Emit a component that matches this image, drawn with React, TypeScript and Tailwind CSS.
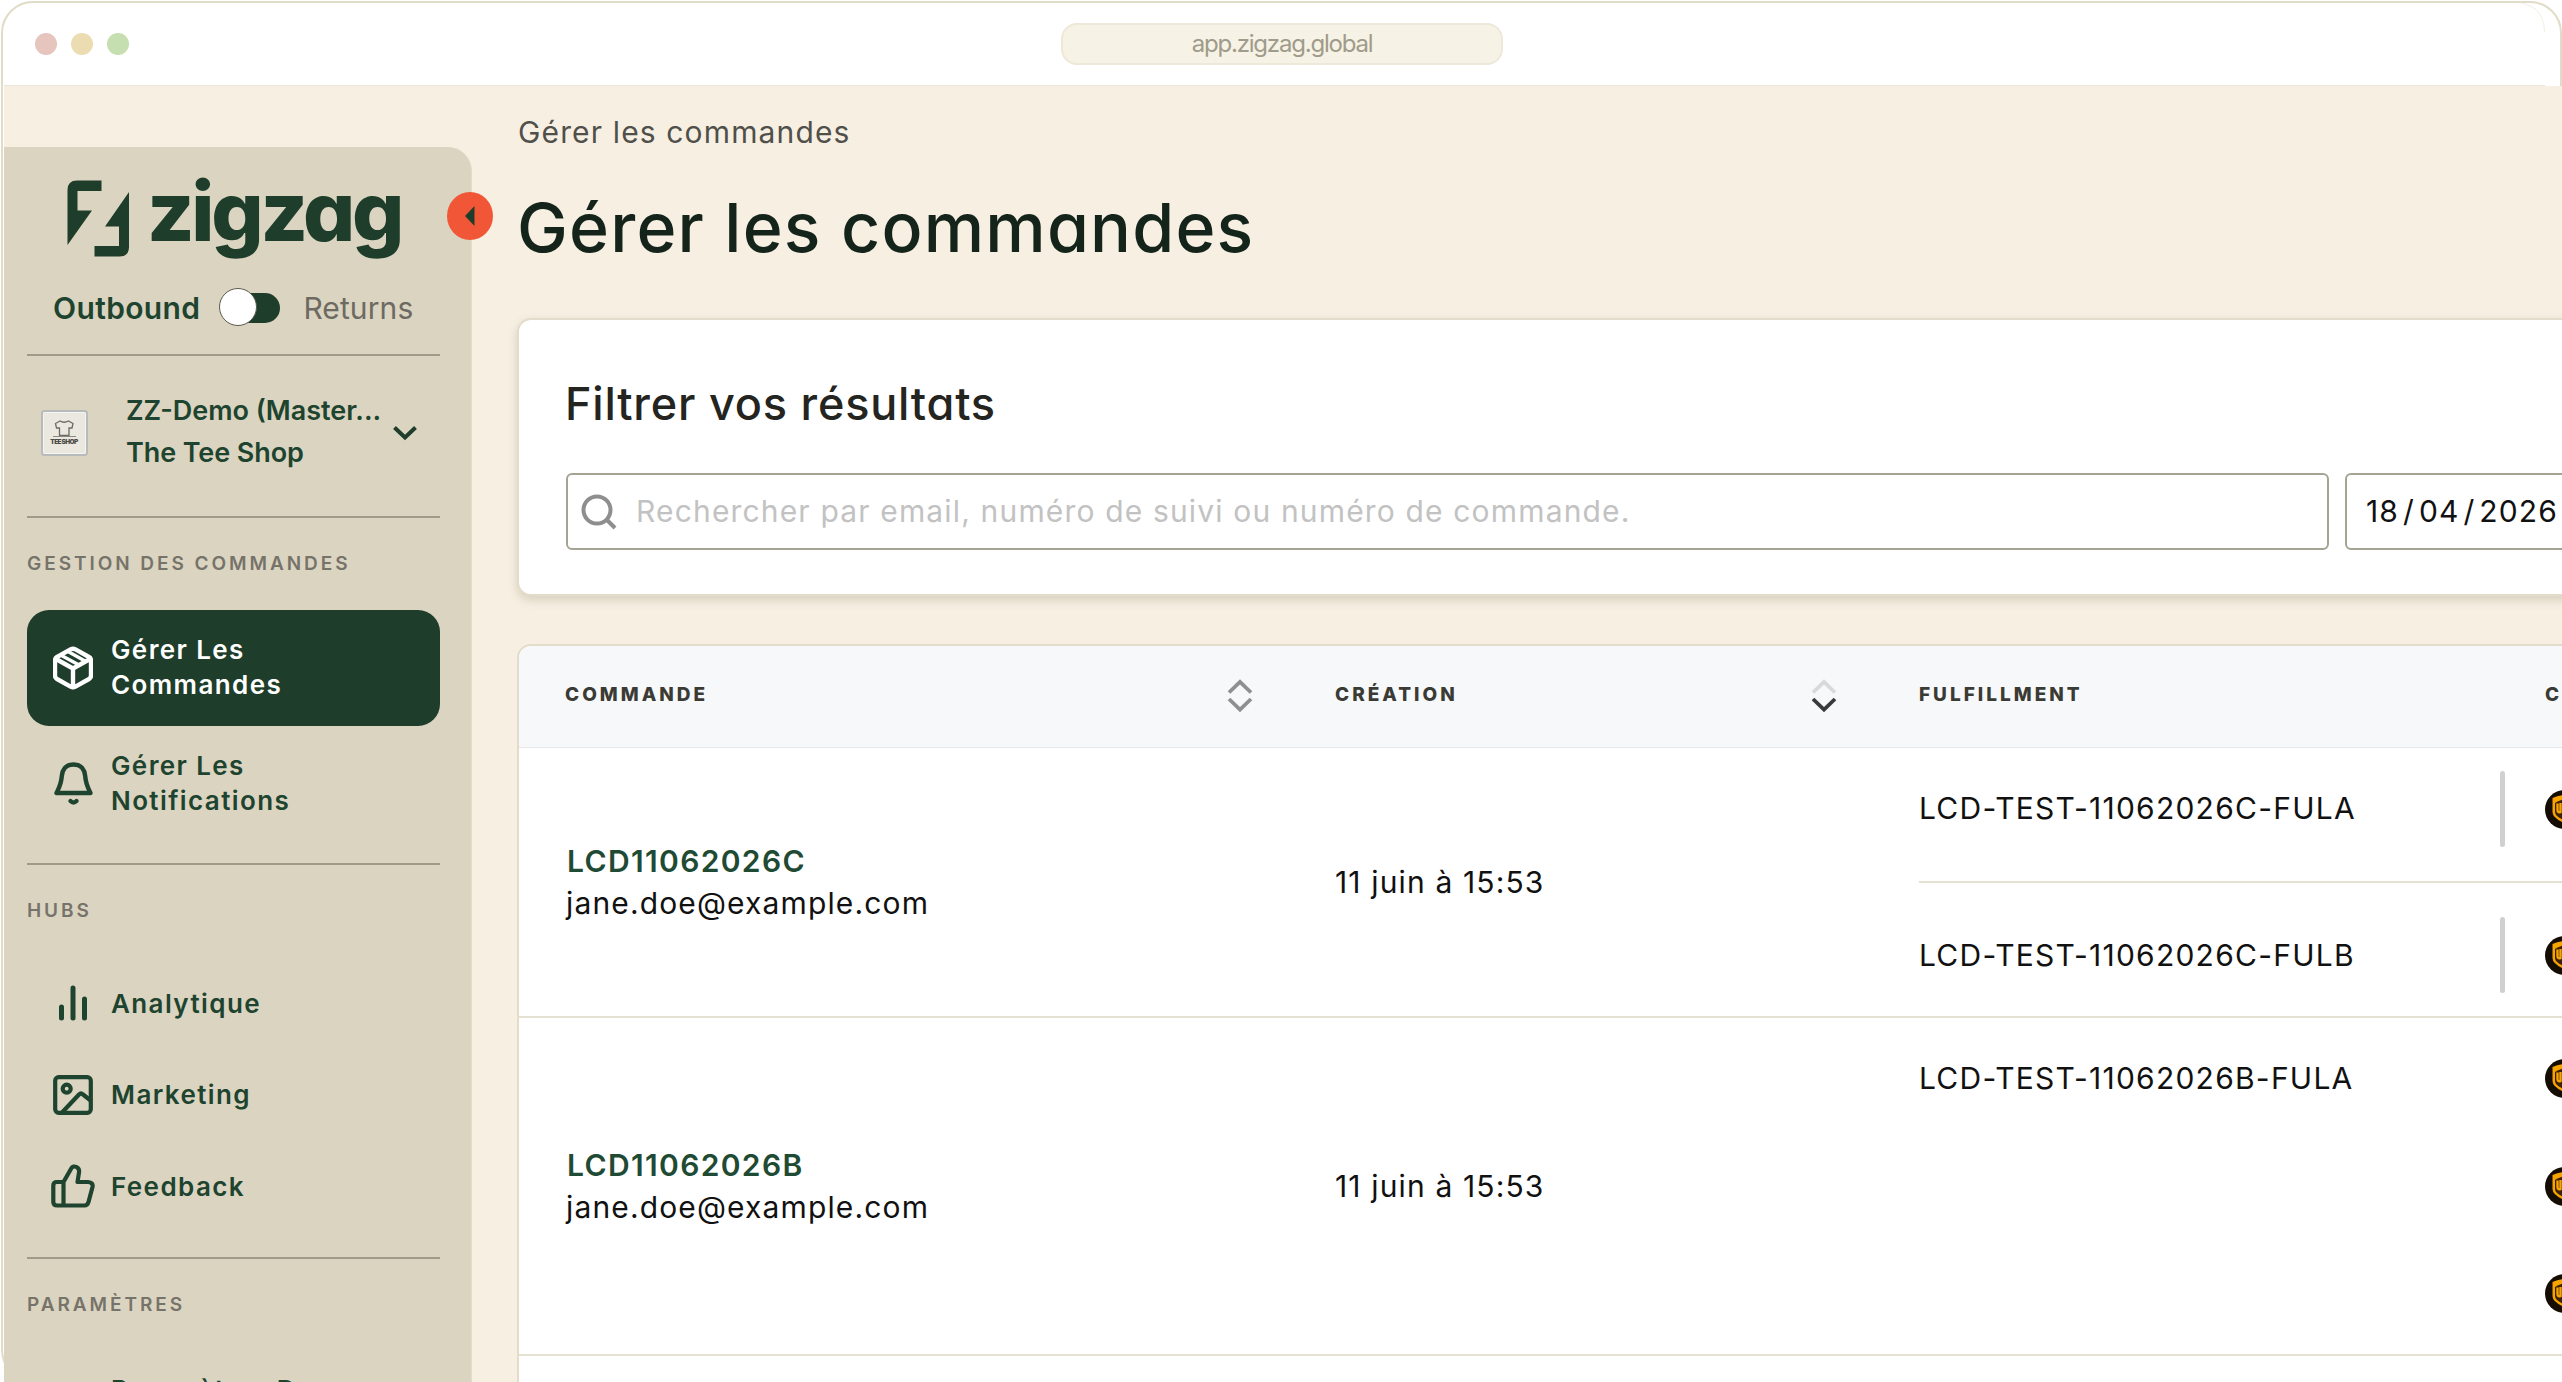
import type { ReactNode } from "react";

const PackageIcon = () => (
  <svg width="40" height="44" viewBox="0 0 40 44" fill="none" stroke="currentColor" strokeWidth="4.400" strokeLinecap="round" strokeLinejoin="round">
    <path d="M18 3.2Q20 2.2 22 3.2L36 11Q38 12.2 38 14.5V29.500Q38 31.800 36 33L22 40.800Q20 41.800 18 40.800L4 33Q2 31.800 2 29.500V14.500Q2 12.200 4 11Z" />
    <path d="M3 13L20 22.500L37 13M20 22.500V41" />
    <path d="M8.500 9.500L26 19M15 5.500L32 15" strokeWidth="3.400" />
  </svg>
);

const BellIcon = () => (
  <svg width="39" height="44" viewBox="0 0 39 44" fill="none" stroke="currentColor" strokeWidth="4.400" strokeLinecap="round" strokeLinejoin="round">
    <path d="M19.500 2.500C11.500 2.500 8.300 8 7.800 14C7.300 22 5.500 25 2.500 31H36.500C33.500 25 31.700 22 31.200 14C30.700 8 27.500 2.500 19.500 2.500Z" />
    <path d="M16.500 39Q19.500 42 22.500 39" />
  </svg>
);

const BarsIcon = () => (
  <svg width="30" height="38" viewBox="0 0 30 38" fill="none" stroke="currentColor" strokeWidth="5" strokeLinecap="round">
    <path d="M3.500 23V34M15 4V34M26.500 15V34" />
  </svg>
);

const ImageIcon = () => (
  <svg width="40" height="40" viewBox="0 0 40 40" fill="none" stroke="currentColor" strokeWidth="4.200" strokeLinecap="round" strokeLinejoin="round">
    <rect x="2.200" y="2.200" width="35.600" height="35.600" rx="3.500" />
    <circle cx="13.700" cy="13.700" r="4" />
    <path d="M9.500 37L26 19.500Q28 17.500 30 19.500L37 25" />
  </svg>
);

const ThumbIcon = () => (
  <svg width="44" height="44" viewBox="0 0 44 44" fill="none" stroke="currentColor" strokeWidth="4.200" strokeLinecap="round" strokeLinejoin="round">
    <path d="M12.500 18L20.500 4C22 1 29 2.500 28 8.500L26.500 18H37Q42.500 18.500 41.500 23L37.500 38Q36.500 41.500 33.500 41.500H6Q2.300 41.500 2.300 38V21.500Q2.300 18 6 18H12.500V41.500" />
  </svg>
);

const SortIcon = ({ up, down }: { up: string; down: string }) => (
  <svg className="mb-0.5" width="26" height="34" viewBox="0 0 26 34" fill="none" strokeWidth="3.800">
    <path d="M2 13.500L13 3L24 13.500" stroke={up} />
    <path d="M2 20L13 30.500L24 20" stroke={down} />
  </svg>
);

const CarrierLogo = () => (
  <svg className="shrink-0" width="39" height="39" viewBox="0 0 39 39">
    <circle cx="19.500" cy="19.500" r="19.500" fill="#150d04" />
    <path d="M7.500 8Q19.500 2.500 31.500 8V22Q31.500 28 19.500 33Q7.500 28 7.500 22Z" fill="#f7a400" />
    <path d="M10 13Q17 8 29 8.500V22Q29 26.500 19.500 30.500Q10 26.500 10 22Z" fill="#3d2008" />
    <path d="M12.500 13.500V20Q12.500 23 15.500 22V13M19 27V13Q23 12 23 16.500T19 21" stroke="#f7a400" strokeWidth="2.400" fill="none" />
  </svg>
);

const Rule = () => <div className="h-0.5 shrink-0 bg-[#a09a88]" />;

const SectionTitle = ({ children }: { children: ReactNode }) => (
  <h3 className="flex h-[92px] shrink-0 items-center text-[19px] font-semibold tracking-[2.95px] text-[#76736a] uppercase">
    {children}
  </h3>
);

const orderLinks = [
  { label: ["Gérer Les", "Commandes"], icon: <PackageIcon />, active: true },
  { label: ["Gérer Les", "Notifications"], icon: <BellIcon />, active: false },
];

const hubLinks = [
  { label: "Analytique", icon: <BarsIcon /> },
  { label: "Marketing", icon: <ImageIcon /> },
  { label: "Feedback", icon: <ThumbIcon /> },
];

const orders = [
  {
    id: "LCD11062026C",
    email: "jane.doe@example.com",
    date: "11 juin à 15:53",
    fulfillments: ["LCD-TEST-11062026C-FULA", "LCD-TEST-11062026C-FULB"],
  },
  {
    id: "LCD11062026B",
    email: "jane.doe@example.com",
    date: "11 juin à 15:53",
    fulfillments: ["LCD-TEST-11062026B-FULA"],
  },
];

function BrowserBar() {
  return (
    <header className="flex h-[86px] w-[2541px] shrink-0 items-center border-b border-[#ebe6da] pt-[3px] pl-[31px]">
      <div className="flex w-[1026px] gap-3.5">
        <span className="size-[22px] rounded-full bg-[#e7c5bf]" />
        <span className="size-[22px] rounded-full bg-[#ebdcb2]" />
        <span className="size-[22px] rounded-full bg-[#c6dfb0]" />
      </div>
      <div className="flex h-[42px] w-[442px] items-center justify-center rounded-2xl border-2 border-[#eee8d8] bg-[#f6f2e5] text-[24px] tracking-[-1.2px] text-[#a09b8a]">
        app.zigzag.global
      </div>
    </header>
  );
}

function Sidebar() {
  return (
    <aside className="relative mt-[61px] flex w-[468px] shrink-0 flex-col rounded-tr-[24px] border-r border-[#e3dccb] bg-[#dbd4c0] pt-[33px] pr-[31px] pl-[23px]">
      <button className="absolute top-[45px] left-[443px] flex h-12 w-[46px] items-center justify-center rounded-[50%] bg-[#f15637]">
        <svg width="10" height="20" viewBox="0 0 10 20">
          <path d="M9.500 0V20L0 10Z" fill="#1e3d2b" />
        </svg>
      </button>

      <div className="flex h-[77px] shrink-0 pl-10 text-[#1e3d2b]">
        <svg width="63" height="77" viewBox="0 0 63 77" fill="currentColor">
          <path d="M10 0.500H34.500V11H10.500V30.500H25L0.500 65V10Q0.500 0.500 10 0.500Z" />
          <path d="M62 12V67Q62 76.500 52.500 76.500H27.500V66H52V46.500H38Z" />
        </svg>
        <span className="ml-[17px] text-[82px] leading-[64px] font-extrabold tracking-[-3.3px] [font-feature-settings:'cv11']">
          zigzag
        </span>
      </div>

      <div className="mt-[31px] mb-7 flex h-[38px] shrink-0 items-center pl-[26px] text-[30px]">
        <span className="pt-0.5 font-semibold tracking-[0.36px] text-[#1e4430]">Outbound</span>
        <div className="relative ml-[19px] h-[38px] w-[61px]">
          <span className="absolute top-[5px] right-0 h-[30px] w-[56px] rounded-full bg-[#1e3d2b]" />
          <span className="absolute top-0 left-0 size-[38px] rounded-full border border-[#5d5a50] bg-white" />
        </div>
        <span className="ml-[23px] pt-0.5 tracking-[0.1px] text-[#6d6a62]">Returns</span>
      </div>
      <Rule />

      <div className="flex h-[160px] shrink-0 items-center pb-[7px] pl-3.5">
        <svg width="47" height="46" viewBox="0 0 47 46">
          <rect x="1" y="1" width="45" height="44" rx="2.500" fill="#ebe8df" stroke="#b9babb" strokeWidth="2" />
          <rect x="2.500" y="2.500" width="42" height="41" rx="1" fill="none" stroke="#f4f4f4" />
          <path d="M19 11L14.500 13.500L15.500 18H18.500V25.500H28V18H31L32 13.500L27.500 11Q23 13.500 19 11Z" fill="none" stroke="#6c6a66" strokeWidth="1.300" />
          <path d="M12 26.500H35" stroke="#8b8983" />
          <text x="23.300" y="33.500" textAnchor="middle" fontFamily="Inter" fontSize="6.500" fontWeight="900" fill="#4c4a46" textLength="28">
            TEE SHOP
          </text>
        </svg>
        <div className="ml-[38px] w-[255px] pb-px text-[27px] leading-[42px] font-semibold text-[#1e4430]">
          <p className="whitespace-nowrap">ZZ-Demo (Master...</p>
          <p className="tracking-[-0.1px]">The Tee Shop</p>
        </div>
        <svg className="ml-[11px]" width="26" height="18" viewBox="0 0 26 18" fill="none" stroke="#1e3d2b" strokeWidth="4">
          <path d="M2.500 3.500L13 13.500L23.500 3.500" />
        </svg>
      </div>
      <Rule />

      <SectionTitle>Gestion des commandes</SectionTitle>
      <nav className="mb-[22px] shrink-0 text-[26px] leading-[35px] font-semibold tracking-[1.4px]">
        {orderLinks.map((link) => (
          <a
            key={link.label[1]}
            className={
              link.active
                ? "flex h-[116px] items-center gap-4 rounded-[22px] bg-[#1e3d2b] pl-6 text-white"
                : "flex h-[115px] items-center gap-4 pl-6 text-[#1e4430]"
            }
          >
            <span className="flex w-11 justify-center">{link.icon}</span>
            <span className="pb-0.5">
              {link.label[0]}
              <br />
              {link.label[1]}
            </span>
          </a>
        ))}
      </nav>
      <Rule />

      <SectionTitle>Hubs</SectionTitle>
      <nav className="mb-[25.5px] shrink-0 text-[26px] font-semibold tracking-[1.4px] text-[#1e4430]">
        {hubLinks.map((link) => (
          <a key={link.label} className="flex h-[91.5px] items-center gap-4 pt-px pl-6">
            <span className="flex w-11 justify-center">{link.icon}</span>
            {link.label}
          </a>
        ))}
      </nav>
      <Rule />

      <SectionTitle>Paramètres</SectionTitle>
      <a className="shrink-0 pt-[21px] pl-[84px] text-[26px] leading-[35px] font-semibold tracking-[1.4px] text-[#1e4430]">
        Paramètres De
      </a>
    </aside>
  );
}

function FilterCard() {
  return (
    <section className="h-[278px] rounded-[14px] border-2 border-[#e4dccb] bg-white pt-[52px] pl-[46px] shadow-[0_4px_10px_rgba(120,120,80,0.25)]">
      <h2 className="text-[45px] leading-[64px] font-[450] tracking-[0.8px] text-[#242420] [font-feature-settings:'cv11'] [font-optical-sizing:none]">
        Filtrer vos résultats
      </h2>
      <div className="mt-[37px] flex gap-4 pl-px text-[30px]">
        <div className="flex h-[77px] w-[1763px] shrink-0 items-center rounded-md border-2 border-[#a5a392] pl-[13px]">
          <svg width="36" height="36" viewBox="0 0 36 36" fill="none" stroke="#8e8e8e" strokeWidth="4">
            <circle cx="16" cy="16" r="13.500" />
            <path d="M26 26L34 34" />
          </svg>
          <span className="ml-[19px] tracking-[1.16px] whitespace-nowrap text-[#c2c2c2]">
            Rechercher par email, numéro de suivi ou numéro de commande.
          </span>
        </div>
        <div className="flex h-[77px] w-[420px] shrink-0 items-center rounded-md border-2 border-[#a5a392] pl-[19px] tracking-[1.1px] text-[#111]">
          18<span className="px-1">/</span>04<span className="px-1">/</span>2026
        </div>
      </div>
    </section>
  );
}

function OrdersTable() {
  return (
    <section className="mt-12 rounded-t-[14px] border-2 border-[#e4dccb] bg-white text-[30px] tracking-[1.14px] text-[#111]">
      <div className="flex h-[102px] items-center rounded-t-xl border-b border-[#e6e7e9] bg-[#f7f8fa] pl-[46px] text-[19px] font-extrabold tracking-[3px] text-[#3b3b35] uppercase">
        <div className="flex w-[770px] items-center">
          <span className="w-[662px] pb-0.5">Commande</span>
          <SortIcon up="#8f8f8f" down="#8f8f8f" />
        </div>
        <div className="flex w-[584px] items-center">
          <span className="w-[476px] pb-0.5">Création</span>
          <SortIcon up="#d9d9d9" down="#3a3a3a" />
        </div>
        <span className="w-[626px] pb-0.5">Fulfillment</span>
        <span className="pb-0.5">C</span>
      </div>

      {orders.map((order) => (
        <div key={order.id} className="flex items-center border-b-2 border-[#e4e0d2] pl-[47px]">
          <div className="w-[769px] leading-[42px]">
            <p className="pl-px font-semibold tracking-[1.35px] text-[#1f4a33]">{order.id}</p>
            <p>{order.email}</p>
          </div>
          <div className="w-[584px]">{order.date}</div>
          {order.fulfillments.length > 1 ? (
            <div className="flex-1">
              <div className="flex items-start border-b-2 border-[#e4e0d2] pt-[23px] pb-[34px]">
                <span className="w-[581px] leading-[75px] tracking-[1.24px]">{order.fulfillments[0]}</span>
                <span className="h-[76px] w-[5px] rounded-sm bg-[#d0d0d0]" />
                <span className="mt-[19px] ml-10">
                  <CarrierLogo />
                </span>
              </div>
              <div className="flex items-start pt-[34px] pb-[23px]">
                <span className="w-[581px] leading-[76px] tracking-[1.24px]">{order.fulfillments[1]}</span>
                <span className="h-[76px] w-[5px] rounded-sm bg-[#d0d0d0]" />
                <span className="mt-[19px] ml-10">
                  <CarrierLogo />
                </span>
              </div>
            </div>
          ) : (
            <div className="flex h-[336px] flex-1 items-start pt-[7px]">
              <span className="w-[626px] leading-[107px] tracking-[1.24px]">{order.fulfillments[0]}</span>
              <div>
                {[0, 1, 2].map((i) => (
                  <div key={i} className="flex h-[107.5px] items-center">
                    <CarrierLogo />
                  </div>
                ))}
              </div>
            </div>
          )}
        </div>
      ))}
      <div className="h-[200px]" />
    </section>
  );
}

export default function App() {
  return (
    <div className="relative h-[1382px] w-[2562px] overflow-hidden bg-white font-['Inter',sans-serif]">
      {/* window outline, partly covered by the page body */}
      <div className="absolute top-px left-px h-[1381px] w-[2561px] rounded-[32px] border-2 border-[#e0dcc8]" />
      <svg className="absolute top-0.5 left-[2520px]" width="26" height="32" viewBox="0 0 26 32" fill="none">
        <path d="M1 1Q24 5 24.500 30" stroke="#f3efe2" />
      </svg>
      <div className="relative flex h-full flex-col pl-1">
        <BrowserBar />
        <div className="flex min-h-0 flex-1 bg-[#f7efe2]">
          <Sidebar />
          <main className="w-[2090px] shrink-0 overflow-hidden pl-[45px]">
            <p className="pt-[26px] pl-px text-[30px] leading-10 tracking-[1.14px] text-[#50504b]">Gérer les commandes</p>
            <h1 className="mt-[35px] mb-[51px] text-[68px] leading-[80px] font-[450] tracking-[1.2px] text-[#14241b] [font-feature-settings:'cv11'] [font-optical-sizing:none]">
              Gérer les commandes
            </h1>
            <div className="w-[2300px]">
              <FilterCard />
              <OrdersTable />
            </div>
          </main>
        </div>
      </div>
    </div>
  );
}
